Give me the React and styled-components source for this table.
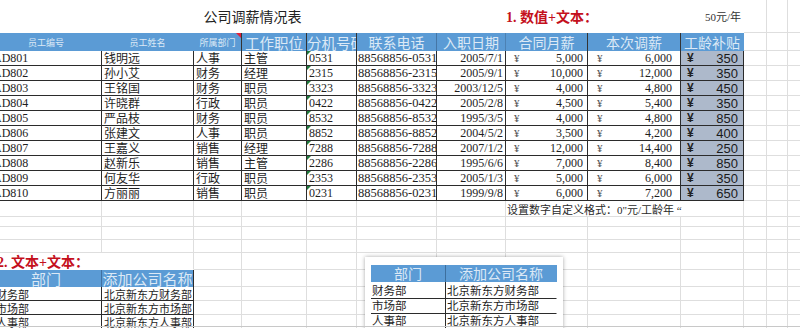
import styled, { createGlobalStyle } from 'styled-components';

const COLS = [111, 92, 48, 65, 50, 80, 69, 82, 93, 63, 23, 21, 40];
const TEMPLATE = COLS.map((w) => `${w}px`).join(' ');

const GRID = '#dedede';
const INK = '#2b2b2b';
const BLUE = '#5b9bd5';
const HEAD_TEXT = '#dce9f6';

const staff = [
  ['AD801', '钱明远', '人事', '主管', '0531', '2005/7/1', '5,000', '6,000', '350'],
  ['AD802', '孙小艾', '财务', '经理', '2315', '2005/9/1', '10,000', '12,000', '350'],
  ['AD803', '王铭国', '财务', '职员', '3323', '2003/12/5', '4,000', '4,800', '450'],
  ['AD804', '许晓群', '行政', '职员', '0422', '2005/2/8', '4,500', '5,400', '350'],
  ['AD805', '严品枝', '财务', '职员', '8532', '1995/3/5', '4,000', '4,800', '850'],
  ['AD806', '张建文', '人事', '职员', '8852', '2004/5/2', '3,500', '4,200', '400'],
  ['AD807', '王嘉义', '销售', '经理', '7288', '2007/1/2', '12,000', '14,400', '250'],
  ['AD808', '赵新乐', '销售', '主管', '2286', '1995/6/6', '7,000', '8,400', '850'],
  ['AD809', '何友华', '行政', '职员', '2353', '2005/1/3', '5,000', '6,000', '350'],
  ['AD810', '方丽丽', '销售', '职员', '0231', '1999/9/8', '6,000', '7,200', '650'],
];

const depts = [
  ['财务部', '北京新东方财务部'],
  ['市场部', '北京新东方市场部'],
  ['人事部', '北京新东方人事部'],
];

const GlobalStyle = createGlobalStyle`
  html, body {
    margin: 0;
    padding: 0;
    background: #fff;
  }
  body {
    font-family: "Liberation Serif", "Noto Sans CJK SC", serif;
    color: #1e1e1e;
  }
`;

const Page = styled.div`
  position: relative;
  width: 800px;
  height: 328px;
  overflow: hidden;
  background: #fff;
`;

const Sheet = styled.div`
  margin-left: -9px;
  width: 837px;
`;

const Row = styled.div`
  display: grid;
  grid-template-columns: ${TEMPLATE};
  height: ${(p) => p.$h}px;
`;

const GridCell = styled.div`
  box-sizing: border-box;
  grid-column: ${(p) => (p.$span ? `span ${p.$span}` : 'auto')};
  border-right: 1px solid ${GRID};
  border-bottom: 1px solid ${GRID};
`;

const TextCell = styled.div`
  box-sizing: border-box;
  grid-column: ${(p) => (p.$span ? `span ${p.$span}` : 'auto')};
  display: flex;
  align-items: center;
  justify-content: ${(p) => p.$justify || 'flex-start'};
  padding: 0 ${(p) => p.$padR || 0}px 0 ${(p) => p.$padL || 0}px;
  white-space: nowrap;
  overflow: hidden;
  font-size: ${(p) => p.$size || 12}px;
  font-weight: ${(p) => (p.$bold ? 700 : 400)};
  color: ${(p) => p.$color || '#1e1e1e'};
  border-right: 1px solid ${(p) => p.$right || 'transparent'};
  border-bottom: 1px solid ${(p) => p.$bottom || 'transparent'};
`;

const HeadCell = styled.div`
  position: relative;
  box-sizing: border-box;
  display: flex;
  align-items: center;
  justify-content: ${(p) => p.$justify || 'center'};
  overflow: hidden;
  white-space: nowrap;
  background: ${BLUE};
  color: ${HEAD_TEXT};
  font-family: "Noto Sans CJK SC", sans-serif;
  font-size: ${(p) => p.$size || 14}px;
  border-right: 1px solid ${(p) => p.$divider || 'transparent'};
`;

const BodyCell = styled.div`
  position: relative;
  box-sizing: border-box;
  display: flex;
  align-items: center;
  justify-content: ${(p) => p.$justify || 'flex-start'};
  padding: 0 ${(p) => p.$padR || 0}px 0 ${(p) => p.$padL || 2}px;
  overflow: hidden;
  white-space: nowrap;
  font-size: ${(p) => p.$size || 12}px;
  background: ${(p) => p.$bg || 'transparent'};
  border-right: 1px solid ${INK};
  border-bottom: 1px solid ${INK};
`;

const Yen = styled.span`
  font-size: 11px;
  color: #555;
`;

const BonusYen = styled.span`
  font-family: "Liberation Sans", sans-serif;
  font-size: 12px;
  font-weight: 700;
  color: #222;
`;

const Bonus = styled.span`
  font-family: "Liberation Sans", sans-serif;
  font-size: 13px;
  color: #1a1a1a;
`;

const TextFlag = styled.span`
  position: absolute;
  left: 0;
  top: 0;
  width: 0;
  height: 0;
  border-top: 4px solid #1f7a3c;
  border-right: 4px solid transparent;
`;

const CommentFlag = styled.span`
  position: absolute;
  right: 0;
  top: 0;
  width: 0;
  height: 0;
  border-top: 5px solid #e0203a;
  border-left: 5px solid transparent;
`;

const Picture = styled.div`
  position: absolute;
  left: 365px;
  top: 257px;
  width: 198px;
  height: 90px;
  box-sizing: border-box;
  padding: 8px 6px 0;
  background: #fff;
  box-shadow: 0 0 4px rgba(0, 0, 0, 0.35);
`;

const PicRow = styled.div`
  display: grid;
  grid-template-columns: 75px 111px;
  height: ${(p) => p.$h}px;
`;

const PicHead = styled.div`
  display: flex;
  align-items: center;
  justify-content: center;
  overflow: hidden;
  background: ${BLUE};
  color: ${HEAD_TEXT};
  font-family: "Noto Sans CJK SC", sans-serif;
  font-size: 14px;
  line-height: 17px;
  border-right: 1px solid ${(p) => (p.$first ? '#3d6f9e' : 'transparent')};
`;

const PicCell = styled.div`
  box-sizing: border-box;
  display: flex;
  align-items: center;
  padding-left: 1px;
  font-family: "Noto Sans CJK SC", sans-serif;
  font-size: 11.5px;
  color: #1e1e1e;
  border-bottom: 1px solid ${INK};
  border-right: 1px solid ${(p) => (p.$first ? INK : 'transparent')};
`;

const BottomEdge = styled.div`
  position: absolute;
  left: 0;
  right: 0;
  bottom: 1px;
  height: 1px;
  background: #c8c8c8;
`;

function GridFill({ count }) {
  return Array.from({ length: count }, (_, i) => <GridCell key={i} />);
}

function EmptyRow({ h }) {
  return (
    <Row $h={h}>
      <GridFill count={COLS.length} />
    </Row>
  );
}

function StaffRow({ person }) {
  const [id, name, dept, role, ext, date, base, raised, bonus] = person;
  return (
    <Row $h={15}>
      <BodyCell $padL={2}>{id}</BodyCell>
      <BodyCell>{name}</BodyCell>
      <BodyCell>{dept}</BodyCell>
      <BodyCell>{role}</BodyCell>
      <BodyCell>
        <TextFlag />
        {ext}
      </BodyCell>
      <BodyCell $padL={1} $size={12.5}>88568856-{ext}</BodyCell>
      <BodyCell $justify="flex-end" $padR={2}>{date}</BodyCell>
      <BodyCell $justify="space-between" $padL={8} $padR={4}>
        <Yen>¥</Yen>
        {base}
      </BodyCell>
      <BodyCell $justify="space-between" $padL={9} $padR={8}>
        <Yen>¥</Yen>
        {raised}
      </BodyCell>
      <BodyCell $justify="space-between" $padL={6} $padR={5} $bg="#adb9cb">
        <BonusYen>¥</BonusYen>
        <Bonus>{bonus}</Bonus>
      </BodyCell>
      <GridFill count={3} />
    </Row>
  );
}

export default function App() {
  return (
    <Page>
      <GlobalStyle />
      <Sheet>
        <Row $h={33}>
          <TextCell $span={7} $justify="center" $padL={9} $size={14} $color="#222">
            公司调薪情况表
          </TextCell>
          <TextCell $span={2} $size={14} $bold $color="#c4101c">
            1. 数值+文本：
          </TextCell>
          <TextCell $justify="flex-end" $padR={2} $size={11} $color="#333">
            50元/年
          </TextCell>
          <GridFill count={3} />
        </Row>

        <Row $h={18}>
          <HeadCell $size={9}>员工编号</HeadCell>
          <HeadCell $size={9}>员工姓名</HeadCell>
          <HeadCell $size={9} $divider="#333">
            所属部门
            <CommentFlag />
          </HeadCell>
          <HeadCell $size={14.5} $divider="#333">工作职位</HeadCell>
          <HeadCell $size={14.5} $justify="flex-start" $divider="#333">分机号码</HeadCell>
          <HeadCell $divider="rgba(30,50,80,0.35)">联系电话</HeadCell>
          <HeadCell $divider="rgba(30,50,80,0.25)">入职日期</HeadCell>
          <HeadCell $divider="#333">合同月薪</HeadCell>
          <HeadCell $divider="#333">本次调薪</HeadCell>
          <HeadCell>工龄补贴</HeadCell>
          <GridFill count={3} />
        </Row>

        {staff.map((person) => (
          <StaffRow key={person[0]} person={person} />
        ))}

        <Row $h={16}>
          <GridFill count={7} />
          <TextCell $span={3} $padL={1} $size={11} $color="#2a2a2a" $bottom={GRID} $right={GRID}>
            设置数字自定义格式：0"元/工龄年 “
          </TextCell>
          <GridFill count={3} />
        </Row>

        <EmptyRow h={10} />
        <EmptyRow h={13} />
        <EmptyRow h={13} />

        <Row $h={17}>
          <TextCell $span={2} $padL={6} $size={14} $bold $color="#c4101c" $right={GRID}>
            2. 文本+文本：
          </TextCell>
          <GridFill count={11} />
        </Row>

        <Row $h={17}>
          <HeadCell $size={15} $divider="rgba(30,50,80,0.4)">部门</HeadCell>
          <HeadCell $size={15} $divider={INK}>添加公司名称</HeadCell>
          <GridFill count={11} />
        </Row>

        {depts.map(([dept, full]) => (
          <Row $h={14} key={dept}>
            <TextCell $padL={5} $size={11} $right={INK} $bottom={INK}>{dept}</TextCell>
            <TextCell $padL={2} $size={11} $right={INK} $bottom={INK}>{full}</TextCell>
            <GridFill count={11} />
          </Row>
        ))}
      </Sheet>

      <Picture>
        <PicRow $h={17}>
          <PicHead $first>部门</PicHead>
          <PicHead>添加公司名称</PicHead>
        </PicRow>
        {depts.map(([dept, full]) => (
          <PicRow $h={15} key={dept}>
            <PicCell $first>{dept}</PicCell>
            <PicCell>{full}</PicCell>
          </PicRow>
        ))}
      </Picture>
      <BottomEdge />
    </Page>
  );
}
